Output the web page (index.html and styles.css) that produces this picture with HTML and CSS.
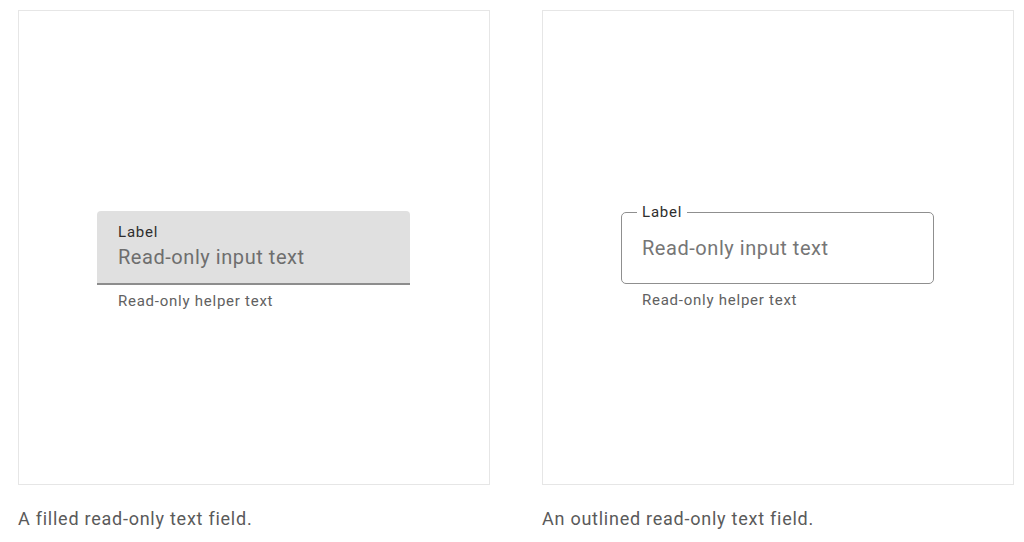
FILE: index.html
```html
<!DOCTYPE html>
<html lang="en">
<head>
<meta charset="utf-8">
<title>Read-only text fields</title>
<link rel="stylesheet" href="styles.css">
</head>
<body>
  <main class="gallery">
    <figure class="example">
      <div class="stage">
        <div class="field-wrap">
          <div class="filled-field">
            <span class="filled-label">Label</span>
            <span class="filled-value">Read-only input text</span>
          </div>
          <div class="helper">Read-only helper text</div>
        </div>
      </div>
      <figcaption class="caption">A filled read-only text field.</figcaption>
    </figure>
    <figure class="example">
      <div class="stage">
        <div class="field-wrap">
          <div class="outlined-field">
            <span class="outlined-label">Label</span>
            <span class="outlined-value">Read-only input text</span>
          </div>
          <div class="helper">Read-only helper text</div>
        </div>
      </div>
      <figcaption class="caption">An outlined read-only text field.</figcaption>
    </figure>
  </main>
</body>
</html>
```

FILE: styles.css
```css
* { box-sizing: border-box; }
html, body { margin: 0; background: #ffffff; }
body {
  font-family: Roboto, "Liberation Sans", Arial, sans-serif;
  padding: 10px 0 0 18px;
}
.gallery {
  display: flex;
  gap: 52px;
}
.example {
  margin: 0;
  width: 472px;
  flex: 0 0 472px;
}
.stage {
  height: 475px;
  border: 1px solid #e6e6e6;
  padding: 200px 0 0 78px;
}
.field-wrap {
  width: 313px;
}
.filled-field {
  height: 74px;
  background: #e0e0e0;
  border-radius: 4px 4px 0 0;
  border-bottom: 2px solid #8d8d8d;
  padding: 13px 0 0 21px;
  display: flex;
  flex-direction: column;
  gap: 5px;
}
.filled-label {
  font-size: 15px;
  line-height: 16px;
  color: #2e2e2e;
  letter-spacing: 0.8px;
}
.filled-value {
  font-size: 20px;
  line-height: 24px;
  color: #6e6e6e;
  letter-spacing: 0.55px;
}
.outlined-field {
  position: relative;
  height: 72px;
  margin-top: 1px;
  border: 1px solid #8f8f8f;
  border-radius: 5px;
  padding: 23px 0 0 20px;
}
.outlined-label {
  position: absolute;
  left: 15px;
  top: -9px;
  padding: 0 5px;
  background: #ffffff;
  font-size: 15px;
  line-height: 16px;
  color: #2e2e2e;
  letter-spacing: 0.8px;
}
.outlined-value {
  display: block;
  font-size: 20px;
  line-height: 24px;
  color: #767676;
  letter-spacing: 0.55px;
}
.helper {
  margin-top: 8px;
  padding-left: 21px;
  font-size: 15px;
  line-height: 16px;
  color: #616161;
  letter-spacing: 0.75px;
}
.caption {
  margin-top: 22px;
  font-size: 18px;
  line-height: 24px;
  color: #5a5a5a;
  letter-spacing: 0.75px;
}
```
